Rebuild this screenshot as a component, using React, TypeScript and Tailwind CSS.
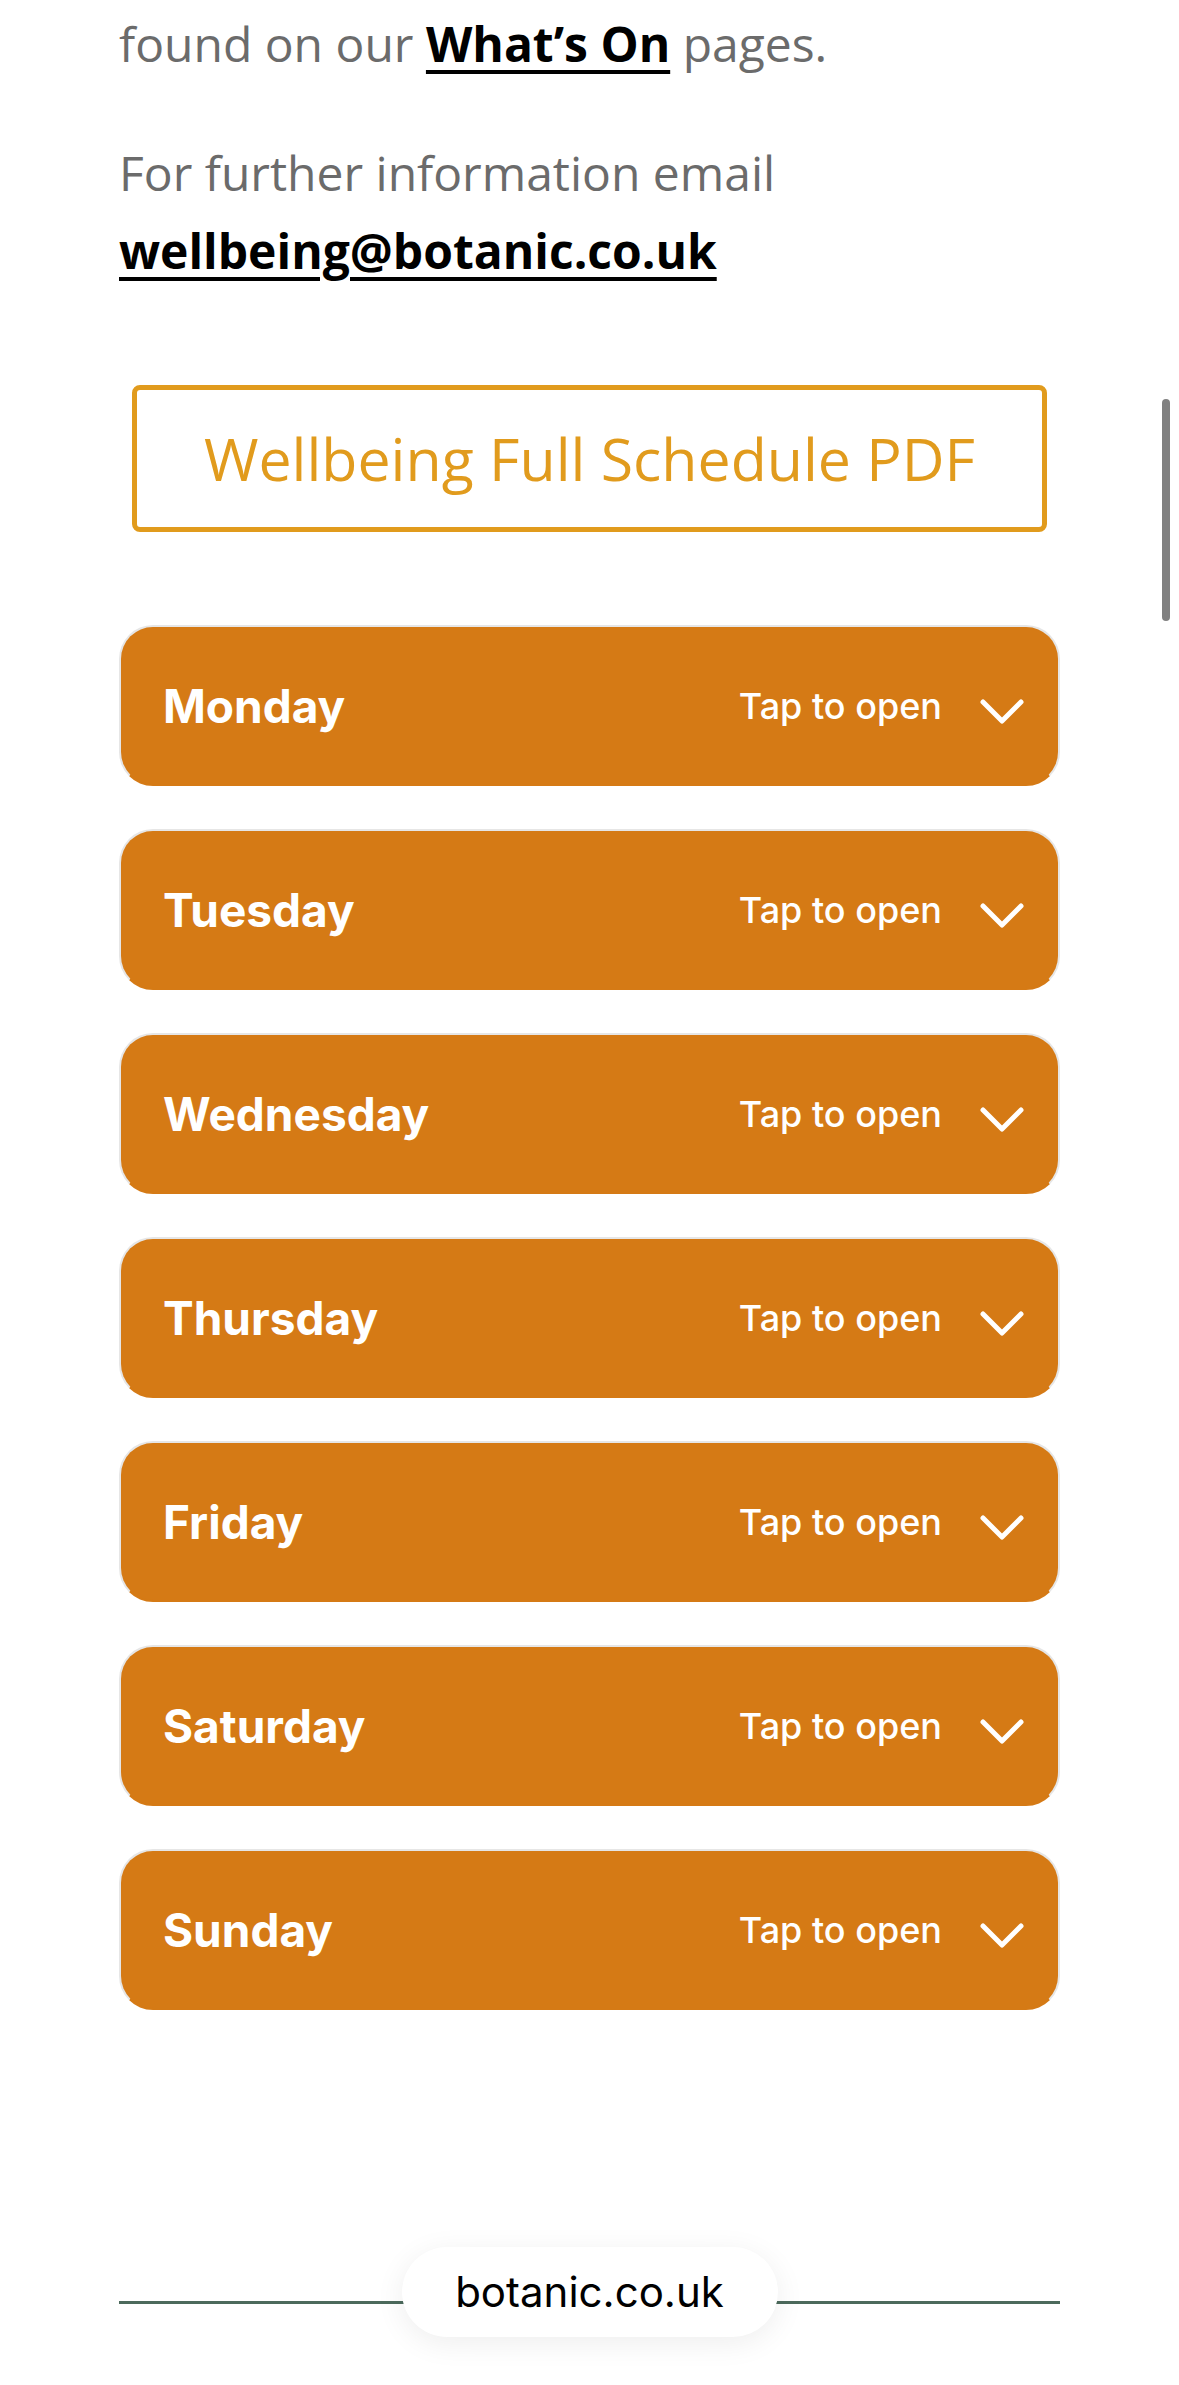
import React from "react";

const days = ["Monday", "Tuesday", "Wednesday", "Thursday", "Friday", "Saturday", "Sunday"];

function Chevron() {
  return (
    <svg width="44" height="26" viewBox="0 0 44 26" fill="none" className="shrink-0">
      <path d="M3 3 L22 22 L41 3" stroke="#ffffff" strokeWidth="5" strokeLinecap="round" strokeLinejoin="round" />
    </svg>
  );
}

function DayCard({ day }: { day: string }) {
  return (
    <div className="flex h-[161px] items-center justify-between rounded-[34px] border-2 border-[#e6e6e6] border-b-[#d57a15] bg-[#d57a15] pl-[42px] pr-[34px] text-white">
      <span className="text-[46px] font-bold leading-none" style={{ fontFamily: "Inter, 'Liberation Sans', sans-serif" }}>
        {day}
      </span>
      <div className="flex items-center gap-[38px]">
        <span className="text-[36px] font-medium leading-none" style={{ fontFamily: "Inter, 'Liberation Sans', sans-serif" }}>
          Tap to open
        </span>
        <div className="pt-[12px]">
          <Chevron />
        </div>
      </div>
    </div>
  );
}

export default function App() {
  return (
    <div
      className="relative h-[2385px] w-full overflow-hidden bg-white"
      style={{ fontFamily: "'Open Sans', 'Noto Sans', sans-serif" }}
    >
      <div className="px-[119px]">
        <p className="pt-[5px] text-[48px] leading-[78px] text-[#6b6b6b]">
          found on our{" "}
          <a className="font-bold text-black underline decoration-[4px] underline-offset-[8px]">What’s On</a>{" "}
          pages.
        </p>
        <p className="mt-[51px] text-[48px] leading-[78px] text-[#6b6b6b]">
          For further information email
          <br />
          <a className="font-bold text-black underline decoration-[4px] underline-offset-[8px]">
            wellbeing@botanic.co.uk
          </a>
        </p>

        <div className="mx-[13px] mt-[95px] flex h-[147px] items-center justify-center rounded-[8px] border-[5px] border-[#e19b1d]">
          <span className="text-[59px] font-normal leading-none text-[#e19b1d]">Wellbeing Full Schedule PDF</span>
        </div>

        <div className="mt-[93px] flex flex-col gap-[43px]">
          {days.map((d) => (
            <DayCard key={d} day={d} />
          ))}
        </div>

        <div className="relative mt-[291px] h-[3px] bg-[#4c6a5c]">
          <div className="absolute left-1/2 top-[-54px] flex h-[90px] w-[376px] -translate-x-1/2 items-center justify-center rounded-[45px] bg-white shadow-[0_6px_30px_rgba(0,0,0,0.07)]">
            <span
              className="text-[42px] leading-none text-black"
              style={{ fontFamily: "Inter, 'Liberation Sans', sans-serif" }}
            >
              botanic.co.uk
            </span>
          </div>
        </div>
      </div>

      <div className="absolute left-[1162px] top-[399px] h-[222px] w-[8px] rounded-full bg-[#808080]" />
    </div>
  );
}
